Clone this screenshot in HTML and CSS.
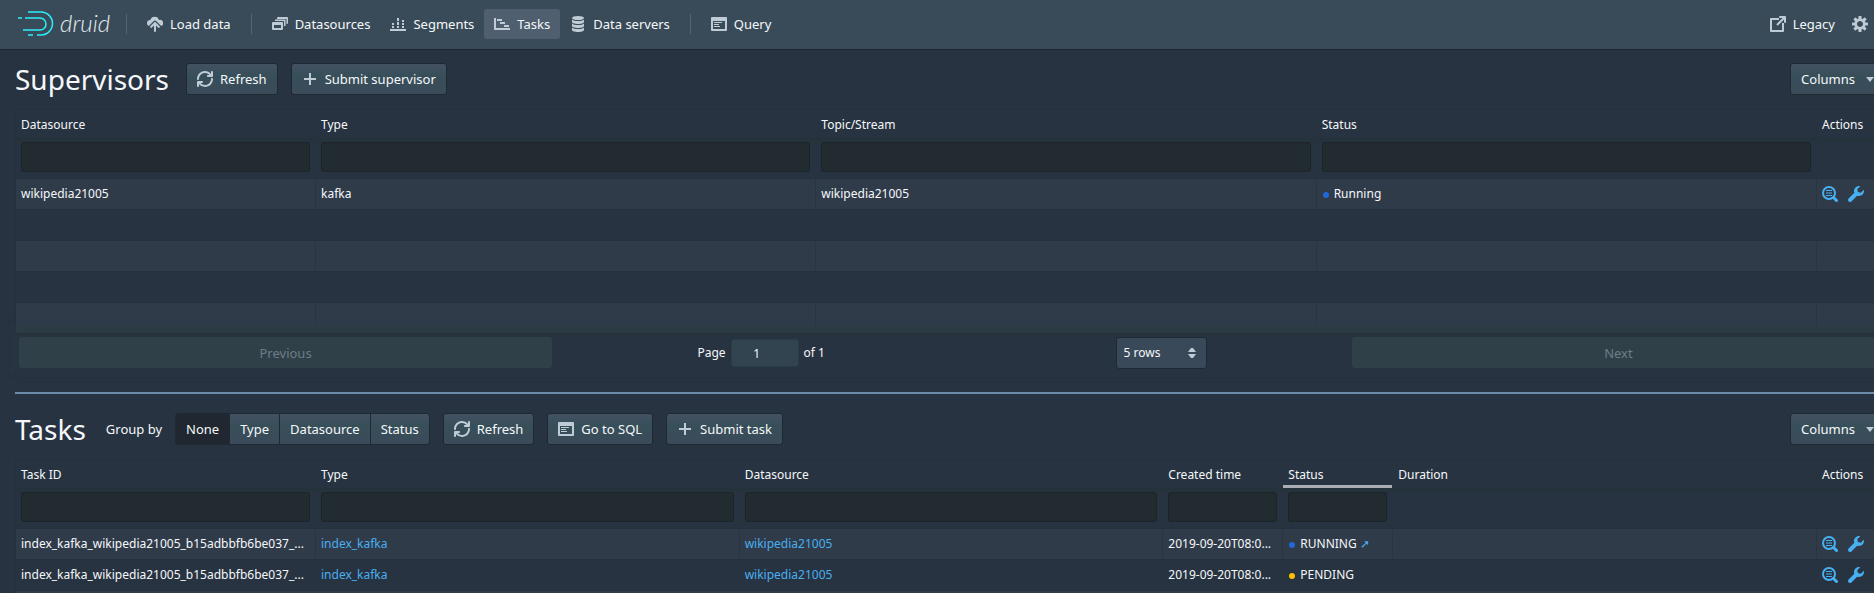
FILE: index.html
```html
<!DOCTYPE html>
<html lang="en">
<head>
<meta charset="utf-8">
<title>Druid - Tasks</title>
<link rel="stylesheet" href="styles.css">
</head>
<body>
<svg class="sprite" aria-hidden="true">
  <symbol id="i-upload" viewBox="0 0 16 16"><path d="M8.7 6.3a1 1 0 0 0-1.4 0l-4 4a1 1 0 0 0 1.4 1.4L7 9.400V15a1 1 0 0 0 2 0V9.400l2.300 2.300a1 1 0 0 0 1.400-1.400z"/><path d="M12 4a4.500 4.500 0 0 0-8.700 0A3.300 3.300 0 0 0 0 7.300c0 1.200.7 2.300 1.800 2.700l4.800-4.800a2 2 0 0 1 2.800 0l4.800 4.700A3 3 0 0 0 12 4z"/></symbol>
  <symbol id="i-stack" viewBox="0 0 16 16"><path d="M10 6H1a1 1 0 0 0-1 1v6a1 1 0 0 0 1 1h9a1 1 0 0 0 1-1V7a1 1 0 0 0-1-1zm-1 6H2V9h7zM12 4H4a1 1 0 0 0-1 1h9v5h1V5a1 1 0 0 0-1-1z"/><path d="M3 3.500h10.500V10H12V5H3zM6 1h9a1 1 0 0 1 1 1v5a1 1 0 0 1-1 1h-.5V3H5V2a1 1 0 0 1 1-1z"/></symbol>
  <symbol id="i-segments" viewBox="0 0 16 16"><path d="M0 13h16v2H0zM2 10h2v2H2zM2 7h2v2H2zM7 10h2v2H7zM7 6h2v3H7zM7 2h2v3H7zM12 10h2v2h-2zM12 7h2v2h-2zM12 4h2v2h-2z"/></symbol>
  <symbol id="i-gantt" viewBox="0 0 16 16"><path d="M0 2h2v10h14v2H0zM3 3h5v2H3zM6 6h5v2H6zM10 9h5v2h-5z"/></symbol>
  <symbol id="i-database" viewBox="0 0 16 16"><ellipse cx="8" cy="2" rx="6" ry="2"/><path d="M2 3.500c1 1 3.300 1.500 6 1.500s5-.5 6-1.500V6c0 1.100-2.700 2-6 2s-6-.9-6-2zM2 7.500C3 8.500 5.300 9 8 9s5-.5 6-1.500V10c0 1.100-2.700 2-6 2s-6-.9-6-2zM2 11.500c1 1 3.300 1.500 6 1.500s5-.5 6-1.500V14c0 1.100-2.700 2-6 2s-6-.9-6-2z"/></symbol>
  <symbol id="i-app" viewBox="0 0 16 16"><path fill-rule="evenodd" d="M1 1h14a1 1 0 0 1 1 1v12a1 1 0 0 1-1 1H1a1 1 0 0 1-1-1V2a1 1 0 0 1 1-1zm1 4v8h12V5z"/><path d="M3 6h8v1H3zM3 8h5v1H3zM3 10h6v1H3z"/></symbol>
  <symbol id="i-share" viewBox="0 0 16 16"><path d="M9 2v2H2v10h10V7h2v8a1 1 0 0 1-1 1H1a1 1 0 0 1-1-1V3a1 1 0 0 1 1-1z"/><path d="M10 0h5a1 1 0 0 1 1 1v5a1 1 0 0 1-2 0V3.400l-6.300 6.300-1.400-1.400L12.600 2H10a1 1 0 0 1 0-2z"/></symbol>
  <symbol id="i-cog" viewBox="0 0 16 16"><path d="M15.190 6.390h-1.850c-.11-.37-.27-.71-.45-1.040l1.360-1.360c.31-.31.31-.82 0-1.130l-1.130-1.130c-.31-.31-.82-.31-1.130 0l-1.360 1.360c-.33-.17-.67-.33-1.040-.44V.79c0-.44-.36-.8-.8-.8h-1.600c-.44 0-.8.36-.8.8v1.860c-.39.12-.75.28-1.100.47l-1.300-1.300c-.3-.3-.79-.3-1.090 0L1.820 2.910c-.3.3-.3.79 0 1.090l1.300 1.300c-.2.34-.36.7-.48 1.090H.79c-.44 0-.8.36-.8.8v1.600c0 .44.36.8.8.8h1.850c.11.37.27.71.45 1.040l-1.360 1.360c-.31.31-.31.82 0 1.130l1.130 1.130c.31.31.82.31 1.130 0l1.360-1.360c.33.18.67.33 1.040.44v1.860c0 .44.36.8.8.8h1.600c.44 0 .8-.36.8-.8v-1.860c.39-.12.75-.28 1.100-.47l1.300 1.300c.3.3.79.3 1.090 0l1.090-1.090c.3-.3.3-.79 0-1.090l-1.300-1.300c.19-.35.36-.71.48-1.100h1.850c.44 0 .8-.36.8-.8v-1.600a.816.816 0 0 0-.81-.79zm-7.200 4.600c-1.660 0-3-1.340-3-3s1.340-3 3-3 3 1.340 3 3-1.340 3-3 3z"/></symbol>
  <symbol id="i-refresh" viewBox="0 0 16 16"><path d="M14.990 6.990c-.55 0-1 .45-1 1 0 3.310-2.690 6-6 6-1.770 0-3.360-.78-4.460-2h1.460c.55 0 1-.45 1-1s-.45-1-1-1h-4c-.55 0-1 .45-1 1v4c0 .55.45 1 1 1s1-.45 1-1v-1.740a7.950 7.950 0 0 0 6 2.740c4.420 0 8-3.580 8-8 0-.55-.45-1-1-1zm0-7c-.55 0-1 .45-1 1v1.740a7.950 7.950 0 0 0-6-2.740c-4.420 0-8 3.580-8 8 0 .55.45 1 1 1s1-.45 1-1c0-3.310 2.690-6 6-6 1.770 0 3.360.78 4.460 2h-1.460c-.55 0-1 .45-1 1s.45 1 1 1h4c.55 0 1-.45 1-1v-4c0-.55-.45-1-1-1z"/></symbol>
  <symbol id="i-plus" viewBox="0 0 16 16"><path d="M7 2h2v5h5v2H9v5H7V9H2V7h5z"/></symbol>
  <symbol id="i-caret" viewBox="0 0 16 16"><path d="M4 6h8L8 11z"/></symbol>
  <symbol id="i-sort" viewBox="0 0 16 16"><path d="M4 7h8L9 3H7zM4 9h8l-3 4H7z"/></symbol>
  <symbol id="i-detail" viewBox="0 0 16 16"><circle cx="7" cy="7" r="6" fill="none" stroke="currentColor" stroke-width="2"/><path d="M4 4h6v1H4zM4 6.500h6v1H4zM4 9h6v1H4z"/><path d="M11.500 11.500l3 3" stroke="currentColor" stroke-width="3" stroke-linecap="round"/></symbol>
  <symbol id="i-wrench" viewBox="0 0 16 16"><path d="M15.830 3.700l-3.060 3.050-2.840-.7-.7-2.830L12.290.17a5.004 5.004 0 0 0-4.830 1.290 4.967 4.967 0 0 0-1.120 5.360L.58 12.580c-.36.36-.58.86-.58 1.410 0 1.100.9 2 2 2 .55 0 1.050-.22 1.410-.59l5.770-5.770c1.790.69 3.910.35 5.350-1.120 1.320-1.300 1.740-3.150 1.300-4.810z"/></symbol>
</svg>
<div class="app">
  <header class="navbar">
    <a class="logo" href="#" aria-label="druid">
      <svg class="logo-mark" viewBox="0 0 36 28" fill="none" stroke="#2ceefb" stroke-width="1.500"><path d="M10 2h13a11.500 11.500 0 0 1 0 23h-4M0 8h4M7 8h15a5.500 5.500 0 0 1 0 12H5M10 25h5"/></svg>
      <span class="logo-text">druid</span>
    </a>
    <span class="divider"></span>
    <a class="nav-item" href="#"><svg class="icon"><use href="#i-upload"/></svg>Load data</a>
    <span class="divider"></span>
    <a class="nav-item" href="#"><svg class="icon"><use href="#i-stack"/></svg>Datasources</a>
    <a class="nav-item" href="#"><svg class="icon"><use href="#i-segments"/></svg>Segments</a>
    <a class="nav-item active" href="#"><svg class="icon"><use href="#i-gantt"/></svg>Tasks</a>
    <a class="nav-item" href="#"><svg class="icon"><use href="#i-database"/></svg>Data servers</a>
    <span class="divider"></span>
    <a class="nav-item" href="#"><svg class="icon"><use href="#i-app"/></svg>Query</a>
    <span class="spacer"></span>
    <a class="nav-item" href="#"><svg class="icon"><use href="#i-share"/></svg>Legacy</a>
    <button class="nav-item nav-cog" type="button" aria-label="Settings"><svg class="icon"><use href="#i-cog"/></svg></button>
  </header>

  <main class="content">
    <section class="pane">
      <div class="control-bar">
        <h1 class="title">Supervisors</h1>
        <button class="btn" type="button"><svg class="icon"><use href="#i-refresh"/></svg>Refresh</button>
        <button class="btn" type="button"><svg class="icon"><use href="#i-plus"/></svg>Submit supervisor</button>
        <span class="spacer"></span>
        <button class="btn" type="button">Columns<svg class="icon"><use href="#i-caret"/></svg></button>
      </div>
      <div class="table-box">
        <table class="grid">
          <colgroup><col class="w-id"><col><col><col><col class="w-actions"></colgroup>
          <thead>
            <tr class="heads"><th>Datasource</th><th>Type</th><th>Topic/Stream</th><th>Status</th><th>Actions</th></tr>
            <tr class="filters">
              <td><input type="text" aria-label="Filter datasource"></td>
              <td><input type="text" aria-label="Filter type"></td>
              <td><input type="text" aria-label="Filter topic or stream"></td>
              <td><input type="text" aria-label="Filter status"></td>
              <td></td>
            </tr>
          </thead>
          <tbody>
            <tr><td>wikipedia21005</td><td>kafka</td><td>wikipedia21005</td><td><span class="dot running"></span>Running</td>
              <td><div class="actions"><button type="button" aria-label="Details"><svg class="icon"><use href="#i-detail"/></svg></button><button type="button" aria-label="Manage"><svg class="icon"><use href="#i-wrench"/></svg></button></div></td></tr>
            <tr><td></td><td></td><td></td><td></td><td></td></tr>
            <tr><td></td><td></td><td></td><td></td><td></td></tr>
            <tr><td></td><td></td><td></td><td></td><td></td></tr>
            <tr><td></td><td></td><td></td><td></td><td></td></tr>
          </tbody>
        </table>
        <div class="pagination">
          <button class="page-btn" type="button" disabled>Previous</button>
          <div class="page-center">
            <label class="page-info">Page <input type="text" value="1"> of 1</label>
            <span class="select-wrap">
              <select aria-label="Rows per page"><option>5 rows</option><option>10 rows</option></select>
              <svg class="icon"><use href="#i-sort"/></svg>
            </span>
          </div>
          <button class="page-btn" type="button" disabled>Next</button>
        </div>
      </div>
    </section>

    <hr class="splitter">

    <section class="pane">
      <div class="control-bar">
        <h1 class="title">Tasks</h1>
        <span class="group-label" id="group-label">Group by</span>
        <div class="btn-group" role="group" aria-labelledby="group-label">
          <button class="btn pressed" type="button">None</button>
          <button class="btn" type="button">Type</button>
          <button class="btn" type="button">Datasource</button>
          <button class="btn" type="button">Status</button>
        </div>
        <button class="btn" type="button"><svg class="icon"><use href="#i-refresh"/></svg>Refresh</button>
        <button class="btn" type="button"><svg class="icon"><use href="#i-app"/></svg>Go to SQL</button>
        <button class="btn" type="button"><svg class="icon"><use href="#i-plus"/></svg>Submit task</button>
        <span class="spacer"></span>
        <button class="btn" type="button">Columns<svg class="icon"><use href="#i-caret"/></svg></button>
      </div>
      <div class="table-box">
        <table class="grid">
          <colgroup><col class="w-id"><col><col><col class="w-time"><col class="w-status"><col><col class="w-actions"></colgroup>
          <thead>
            <tr class="heads"><th>Task ID</th><th>Type</th><th>Datasource</th><th>Created time</th><th class="sorted">Status</th><th>Duration</th><th>Actions</th></tr>
            <tr class="filters">
              <td><input type="text" aria-label="Filter task ID"></td>
              <td><input type="text" aria-label="Filter type"></td>
              <td><input type="text" aria-label="Filter datasource"></td>
              <td><input type="text" aria-label="Filter created time"></td>
              <td><input type="text" aria-label="Filter status"></td>
              <td></td>
              <td></td>
            </tr>
          </thead>
          <tbody>
            <tr><td>index_kafka_wikipedia21005_b15adbbfb6be037_...</td><td><a href="#">index_kafka</a></td><td><a href="#">wikipedia21005</a></td><td>2019-09-20T08:0...</td><td><span class="dot running"></span>RUNNING <a href="#" aria-label="Open location">➚</a></td><td></td>
              <td><div class="actions"><button type="button" aria-label="Details"><svg class="icon"><use href="#i-detail"/></svg></button><button type="button" aria-label="Manage"><svg class="icon"><use href="#i-wrench"/></svg></button></div></td></tr>
            <tr><td>index_kafka_wikipedia21005_b15adbbfb6be037_...</td><td><a href="#">index_kafka</a></td><td><a href="#">wikipedia21005</a></td><td>2019-09-20T08:0...</td><td><span class="dot pending"></span>PENDING</td><td></td>
              <td><div class="actions"><button type="button" aria-label="Details"><svg class="icon"><use href="#i-detail"/></svg></button><button type="button" aria-label="Manage"><svg class="icon"><use href="#i-wrench"/></svg></button></div></td></tr>
            <tr><td></td><td></td><td></td><td></td><td></td><td></td><td></td></tr>
          </tbody>
        </table>
      </div>
    </section>
  </main>
</div>
</body>
</html>
```
FILE: styles.css
```css
* { box-sizing: border-box; }

html, body {
  height: 100%;
  margin: 0;
  overflow: hidden;
}

body {
  background: #283341;
  color: #f5f8fa;
  font: 13px/18px "Noto Sans", "Open Sans", sans-serif;
}

button, input, select { font: inherit; color: inherit; }
a { color: #48aff0; text-decoration: none; }

.sprite { position: absolute; width: 0; height: 0; }
.icon { width: 16px; height: 16px; fill: currentColor; flex: none; display: block; }
.spacer { flex: 1; }

/* The layout is slightly wider than the viewport and runs off its right edge */
.app { width: calc(100% + 30px); }

.navbar {
  display: flex;
  align-items: center;
  height: 50px;
  padding: 0 18px 2px;
  background: #394b59;
  border-bottom: 1px solid #1d2831;
}

.logo { display: flex; align-items: center; gap: 6px; width: 98px; }
.logo-mark { width: 36px; height: 28px; }
.logo-text { padding-bottom: 2px; color: #e4eaee; font: italic 300 24px/28px Lato, sans-serif; }

.divider { width: 1px; height: 20px; margin: 0 10px; background: #55646f; }

.nav-item {
  display: flex;
  align-items: center;
  gap: 7px;
  height: 30px;
  padding: 0 10px;
  border: 0;
  border-radius: 3px;
  background: none;
  color: #f5f8fa;
  white-space: nowrap;
}
.nav-item.active { background: #505f70; }
.nav-item .icon, .btn .icon, .select-wrap .icon { color: #bfccd6; }
.nav-cog { margin-right: 11px; padding: 0 7px; }

.content { padding: 0 15px; }

.control-bar {
  display: flex;
  align-items: center;
  gap: 13px;
  height: 59px;
  padding-bottom: 2px;
}

.title { margin: 0 4px 0 0; font-size: 28px; line-height: 36px; font-weight: 400; }
.group-label { margin-left: 3px; }

.btn {
  display: flex;
  align-items: center;
  gap: 7px;
  height: 32px;
  padding: 0 10px;
  border: 1px solid #1e2a31;
  border-radius: 3px;
  background: linear-gradient(#435163, #374f59 40%, #3b4a5a);
  white-space: nowrap;
}
.btn.pressed { background: #202731; }
.btn-group { display: flex; }
.btn-group .btn + .btn { margin-left: -1px; border-top-left-radius: 0; border-bottom-left-radius: 0; }
.btn-group .btn:not(:last-child) { border-top-right-radius: 0; border-bottom-right-radius: 0; }

.table-box { border: 1px solid #24303a; }

.grid {
  width: 100%;
  table-layout: fixed;
  border-collapse: separate;
  border-spacing: 0;
  font-size: 12px;
}
.w-id { width: 300px; }
.w-time { width: 120px; }
.w-status { width: 110px; }
.w-actions { width: 71px; }

.grid th, .grid td {
  padding: 0 5px;
  text-align: left;
  font-weight: 400;
  white-space: nowrap;
  overflow: hidden;
  text-overflow: ellipsis;
}
.grid .heads th { height: 28px; padding-top: 2px; border-right: 1px solid #24343a; }
.heads th.sorted { box-shadow: inset 0 -3px #acacb4; }
.grid .filters td {
  height: 40px;
  padding-bottom: 2px;
  border-right: 1px solid #27333d;
  background: linear-gradient(#23333a, #283341 6px);
}
.filters input {
  display: block;
  width: 100%;
  height: 30px;
  padding: 0 8px;
  border: 1px solid #1b2429;
  border-radius: 3px;
  background: #212b30;
}
.grid tbody td { height: 31px; border-top: 1px solid #25313b; }
.grid tbody tr:nth-child(odd) td { background: #303b4a; border-right: 1px solid #293540; }
.grid tbody tr:nth-child(even) td { border-right: 1px solid transparent; }
.grid tr > :last-child { border-right: 0; }

.dot {
  display: inline-block;
  width: 6px;
  height: 6px;
  margin: 0 5px 0 1px;
  border-radius: 50%;
}
.dot.running { background: #2167d5; }
.dot.pending { background: #ffbf00; }

.actions { display: flex; gap: 10px; }
.actions button { padding: 0; border: 0; background: none; color: #48aff0; }

.pagination {
  display: grid;
  grid-template-columns: 2fr 3fr 2fr;
  align-items: start;
  height: 44px;
  padding: 2px 3px;
  border-top: 2px solid #25323b;
  box-shadow: 0 -6px 8px #2a3d42;
}
.page-btn { height: 31px; border: 0; border-radius: 3px; background: #304048; color: #6c7d88; }
.page-center { display: flex; align-items: center; justify-content: space-around; font-size: 12px; }
.page-info { display: flex; align-items: center; gap: 5px; }
.page-info input {
  width: 68px;
  height: 28px;
  padding: 0 16px 0 0;
  border: 1px solid #2a3d45;
  border-radius: 3px;
  background: #324450;
  text-align: center;
}
.select-wrap { display: grid; align-items: center; justify-items: end; }
.select-wrap > * { grid-area: 1 / 1; }
.select-wrap .icon { margin-right: 7px; pointer-events: none; }
.select-wrap select {
  appearance: none;
  width: 91px;
  height: 32px;
  padding: 0 24px 0 7px;
  border: 1px solid #1e2a31;
  border-radius: 3px;
  background: #3a4959;
}

.splitter { height: 2px; margin: 14px 0 6px; border: 0; background: #6b8caa; }
```
